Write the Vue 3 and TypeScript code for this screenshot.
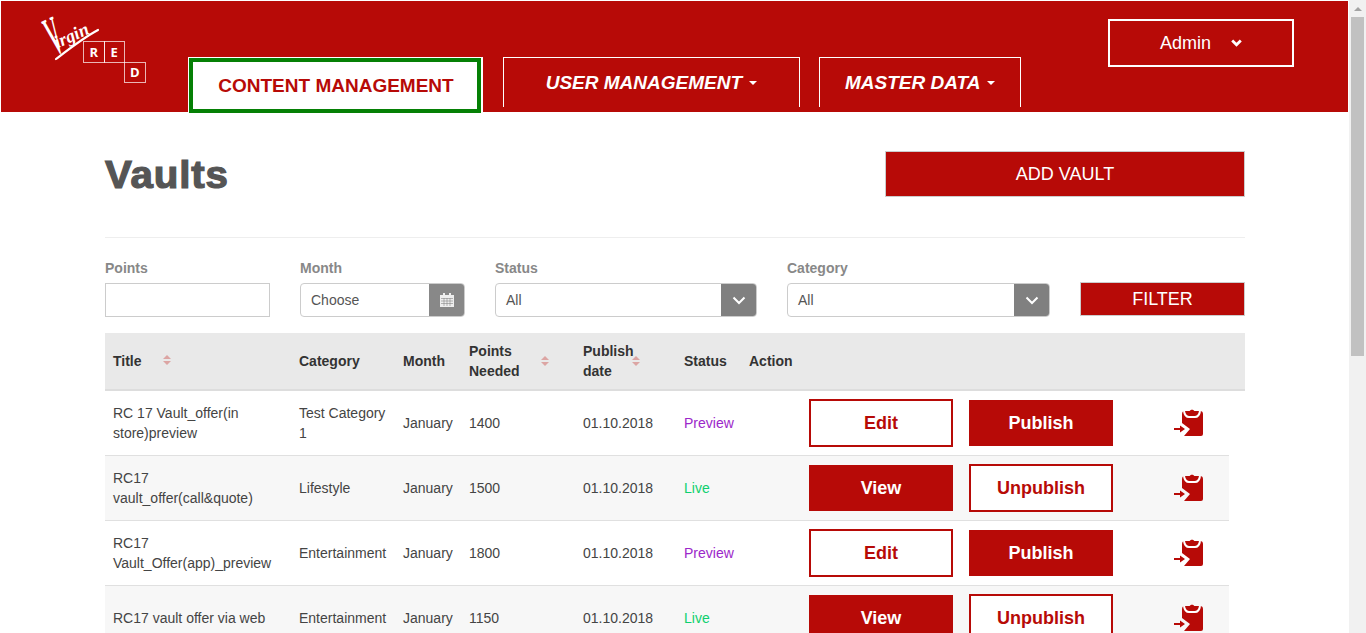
<script setup lang="ts">
interface Row {
  title: string;
  category: string;
  points: number;
  status: 'Preview' | 'Live';
}

const rows: Row[] = [
  { title: 'RC 17 Vault_offer(in store)preview', category: 'Test Category 1', points: 1400, status: 'Preview' },
  { title: 'RC17 vault_offer(call&quote)', category: 'Lifestyle', points: 1500, status: 'Live' },
  { title: 'RC17 Vault_Offer(app)_preview', category: 'Entertainment', points: 1800, status: 'Preview' },
  { title: 'RC17 vault offer via web', category: 'Entertainment', points: 1150, status: 'Live' },
];
</script>

<template>
  <div class="page">
    <div class="main">
      <header class="header">
        <div class="logo">
          <span class="virgin"><span class="big-v">V</span>irgin</span>
          <svg class="swoosh" width="60" height="34" viewBox="0 0 60 34">
            <path d="M11 31 C24 21 38 10 53 2" fill="none" stroke="#fff" stroke-width="2.200" stroke-linecap="round" />
          </svg>
          <div class="tiles">
            <span class="tile">R</span>
            <span class="tile">E</span>
            <span class="tile tile-d">D</span>
          </div>
        </div>
        <nav class="nav">
          <div class="active-wrap">
            <a class="active">CONTENT MANAGEMENT</a>
          </div>
          <a class="nav-item users">USER MANAGEMENT <i class="caret"></i></a>
          <a class="nav-item master">MASTER DATA <i class="caret"></i></a>
        </nav>
        <button class="admin" type="button">
          Admin
          <svg width="11" height="8" viewBox="0 0 11 8"><path d="M1.200 1.600 5.500 5.800l4.300-4.200" fill="none" stroke="#fff" stroke-width="2.800" /></svg>
        </button>
      </header>

      <main class="content">
        <div class="title-row">
          <h1>Vaults</h1>
          <button class="add" type="button">ADD VAULT</button>
        </div>

        <div class="filters">
          <label class="field f-points">
            <span>Points</span>
            <input type="text" />
          </label>
          <label class="field f-month">
            <span>Month</span>
            <div class="control">
              <div class="value">Choose</div>
              <div class="addon">
                <svg width="14" height="14" viewBox="0 0 14 14">
                  <path d="M0 2h14v12H0z" fill="#eee" />
                  <path d="M3 0h2v3H3zM9 0h2v3H9z" fill="#eee" />
                  <path d="M1 5.500h12M1 8h12M1 10.500h12M4 5v8M7 5v8M10 5v8" stroke="#888" stroke-width=".6" />
                </svg>
              </div>
            </div>
          </label>
          <label class="field f-status">
            <span>Status</span>
            <div class="control">
              <div class="value">All</div>
              <div class="addon dark">
                <svg width="14" height="9" viewBox="0 0 14 9"><path d="M1.500 1.500 7 7l5.500-5.500" fill="none" stroke="#fff" stroke-width="2" /></svg>
              </div>
            </div>
          </label>
          <label class="field f-category">
            <span>Category</span>
            <div class="control">
              <div class="value">All</div>
              <div class="addon dark">
                <svg width="14" height="9" viewBox="0 0 14 9"><path d="M1.500 1.500 7 7l5.500-5.500" fill="none" stroke="#fff" stroke-width="2" /></svg>
              </div>
            </div>
          </label>
          <button class="filter" type="button">FILTER</button>
        </div>

        <div class="thead">
          <div class="c-title th">Title <i class="sort s-title"></i></div>
          <div class="c-cat th">Category</div>
          <div class="c-month th">Month</div>
          <div class="c-points th">Points<br />Needed <i class="sort s-points"></i></div>
          <div class="c-date th">Publish<br />date <i class="sort s-date"></i></div>
          <div class="c-status th">Status</div>
          <div class="th">Action</div>
        </div>

        <div v-for="row in rows" :key="row.title" class="row">
          <div class="c-title">{{ row.title }}</div>
          <div class="c-cat">{{ row.category }}</div>
          <div class="c-month">January</div>
          <div class="c-points">{{ row.points }}</div>
          <div class="c-date">01.10.2018</div>
          <div class="c-status" :class="row.status === 'Live' ? 'live' : 'preview'">{{ row.status }}</div>
          <div class="actions">
            <template v-if="row.status === 'Preview'">
              <button class="btn outline" type="button">Edit</button>
              <button class="btn solid" type="button">Publish</button>
            </template>
            <template v-else>
              <button class="btn solid" type="button">View</button>
              <button class="btn outline" type="button">Unpublish</button>
            </template>
            <svg class="clip" width="30" height="30" viewBox="0 0 30 30">
              <path d="M8 6a3 3 0 0 1 3-3h15a3 3 0 0 1 3 3v20a2 2 0 0 1-2 2H10l6-7-8-6Z" fill="#b70a07" />
              <path d="M10 3c.5 3.500 2 6 5 6h6c3 0 4.500-2.500 5-6" fill="none" stroke="#fff" stroke-width="2" />
              <path d="M13 7c0-2 1-3 2.500-3.500C16 1 20 1 20.500 3.500 22 4 23 5 23 7Z" fill="#b70a07" />
              <path d="M0 20h6v2H0zM6 17.500 11 21l-5 3.500Z" fill="#b70a07" />
            </svg>
          </div>
        </div>
      </main>
    </div>
    <div class="scrollbar">
      <div class="arrow"></div>
      <div class="thumb"></div>
    </div>
  </div>
</template>

<style>
html,
body {
  margin: 0;
  height: 100%;
  overflow: hidden;
}
</style>

<style scoped>
.page {
  display: flex;
  height: 633px;
  overflow: hidden;
  font-family: "Liberation Sans", Arial, sans-serif;
  font-size: 14px;
  color: #444;
  background: #fff;
}

.main {
  width: 1349px;
  flex: none;
  padding: 1px 1px 0 1px;
  box-sizing: border-box;
}

.header {
  position: relative;
  height: 111px;
  display: flex;
  background: #b70a07;
}

.logo {
  position: relative;
  width: 187px;
  flex: none;
}

.virgin {
  position: absolute;
  left: 46px;
  top: 23px;
  color: #fff;
  font: italic 700 18px "Liberation Serif", serif;
  letter-spacing: 0;
  transform: rotate(-25deg);
  transform-origin: left bottom;
  white-space: nowrap;
}

.big-v {
  display: inline-block;
  font-size: 46px;
  line-height: 30px;
  width: 14px;
  transform: translate(9px, 5px) scale(0.42, 1.2);
  transform-origin: left bottom;
}

.swoosh {
  position: absolute;
  left: 44px;
  top: 27px;
}

.tiles {
  position: absolute;
  left: 82px;
  top: 40px;
  display: grid;
  grid-template-columns: repeat(3, 20.5px);
  grid-auto-rows: 20.5px;
}

.tile {
  display: flex;
  align-items: center;
  justify-content: center;
  margin: 0 -1px -1px 0;
  border: 1px solid rgba(255, 255, 255, 0.7);
  color: #fff;
  font: 700 13px "Open Sans", sans-serif;
}

.tile-d {
  grid-column: 3;
  grid-row: 2;
}

.nav {
  display: flex;
  align-items: flex-end;
  height: 111px;
}

.active-wrap {
  width: 295px;
  height: 55px;
  margin-right: 20px;
  box-sizing: border-box;
  padding-top: 1px;
  background: #fff;
  border: 1px solid #fff;
  border-bottom: 0;
}

.active {
  display: flex;
  align-items: center;
  justify-content: center;
  width: 292px;
  height: 55px;
  box-sizing: border-box;
  margin-top: -1px;
  padding-left: 2px;
  border: 4px solid #058005;
  background: #fff;
  color: #b70a07;
  font-size: 19px;
  font-weight: 700;
}

.nav-item {
  display: flex;
  align-items: center;
  justify-content: center;
  height: 50px;
  box-sizing: border-box;
  border: 1px solid #fff;
  border-bottom: 0;
  color: #fff;
  font-size: 19px;
  font-weight: 700;
  font-style: italic;
  white-space: pre;
}

.users {
  width: 297px;
  margin: 0 19px 5px 0;
}

.master {
  width: 202px;
  margin-bottom: 5px;
}

.caret {
  display: inline-block;
  margin-left: 2px;
  border-top: 4px solid #fff;
  border-left: 4px solid transparent;
  border-right: 4px solid transparent;
}

.admin {
  position: absolute;
  left: 1107px;
  top: 18px;
  width: 186px;
  height: 48px;
  border: 2px solid #fff;
  background: transparent;
  color: #fff;
  font: 18px "Liberation Sans", sans-serif;
  display: flex;
  align-items: center;
  justify-content: center;
  gap: 20px;
  padding: 0;
}

.content {
  padding: 0 103px 0 104px;
  height: 521px;
  overflow: hidden;
}

.title-row {
  display: flex;
  justify-content: space-between;
  align-items: flex-start;
  height: 126px;
  border-bottom: 1px solid #eee;
  box-sizing: border-box;
  padding-top: 39px;
}

h1 {
  margin: 1px 0 0;
  color: #555;
  font-size: 38px;
  line-height: 46px;
  font-weight: 700;
  letter-spacing: 0.8px;
  -webkit-text-stroke: 1.2px #555;
  transform: scaleX(1.06);
  transform-origin: left center;
}

.add {
  width: 360px;
  height: 46px;
  border: 1px solid #ccc;
  background: #b70a07;
  color: #fff;
  font: 18px "Liberation Sans", sans-serif;
}

.filters {
  display: flex;
  align-items: flex-end;
  height: 79px;
  padding-bottom: 16px;
}

.field {
  display: flex;
  flex-direction: column;
  gap: 7px;
}

.field > span {
  color: #888;
  font-weight: 700;
  line-height: 16px;
}

.f-points {
  width: 165px;
  margin-right: 30px;
}

.f-month {
  width: 165px;
  margin-right: 30px;
}

.f-status {
  width: 262px;
  margin-right: 30px;
}

.f-category {
  width: 263px;
  margin-right: 30px;
}

input {
  box-sizing: border-box;
  width: 100%;
  height: 34px;
  border: 1px solid #ccc;
  padding: 0 10px;
  outline: none;
}

.control {
  display: flex;
  height: 34px;
  box-sizing: border-box;
  border: 1px solid #ccc;
  border-radius: 4px;
  overflow: hidden;
}

.value {
  flex: 1;
  line-height: 32px;
  padding-left: 10px;
  font-size: 14px;
  color: #555;
}

.addon {
  width: 35px;
  display: flex;
  align-items: center;
  justify-content: center;
  background: #888;
}

.dark {
  background: #808080;
}

.filter {
  width: 165px;
  height: 34px;
  margin-bottom: 1px;
  border: 1px solid #ccc;
  background: #b70a07;
  color: #fff;
  font: 18px "Liberation Sans", sans-serif;
}

.thead,
.row {
  display: flex;
  align-items: center;
  box-sizing: border-box;
}

.thead {
  height: 58px;
  background: #e9e9e9;
  border-bottom: 2px solid #ddd;
  color: #333;
}

.th {
  position: relative;
  font-weight: 700;
  line-height: 20px;
}

.row {
  width: 1124px;
  height: 65px;
  border-bottom: 1px solid #e0e0e0;
  line-height: 20px;
}

.row:nth-child(odd) {
  background: #f7f7f7;
}

.c-title {
  width: 194px;
  padding: 0 8px 0 8px;
  box-sizing: border-box;
  flex: none;
}

.c-cat {
  width: 104px;
  flex: none;
  padding-right: 12px;
  box-sizing: border-box;
}

.c-month {
  width: 66px;
  flex: none;
}

.c-points {
  width: 114px;
  flex: none;
}

.c-date {
  width: 101px;
  flex: none;
}

.c-status {
  width: 65px;
  flex: none;
}

.preview {
  color: #9c27c9;
}

.live {
  color: #0fd06e;
}

.actions {
  display: flex;
  align-items: center;
  gap: 16px;
  margin-left: 60px;
}

.btn {
  width: 144px;
  font: 700 18px "Liberation Sans", sans-serif;
  box-sizing: border-box;
}

.solid {
  height: 46px;
  border: 0;
  background: #b70a07;
  color: #fff;
}

.outline {
  height: 48px;
  border: 2px solid #b70a07;
  background: #fff;
  color: #b70a07;
}

.clip {
  margin-left: 45px;
  flex: none;
}

.sort {
  position: absolute;
  width: 0;
  height: 0;
  border-left: 4px solid transparent;
  border-right: 4px solid transparent;
  border-bottom: 4px solid #dca5a3;
}

.sort::after {
  content: "";
  position: absolute;
  left: -4px;
  top: 6px;
  border-left: 4px solid transparent;
  border-right: 4px solid transparent;
  border-top: 4px solid #dca5a3;
}

.s-title {
  left: 58px;
  top: 4px;
}

.s-points {
  left: 72px;
  top: 15px;
}

.s-date {
  left: 49px;
  top: 15px;
}

.scrollbar {
  flex: 1;
  background: #f1f1f1;
  display: flex;
  flex-direction: column;
  align-items: center;
}

.arrow {
  margin: 7px 0 6px;
  border-left: 4px solid transparent;
  border-right: 4px solid transparent;
  border-bottom: 4px solid #a3a3a3;
}

.thumb {
  width: 13px;
  height: 339px;
  background: #c1c1c1;
}
</style>
